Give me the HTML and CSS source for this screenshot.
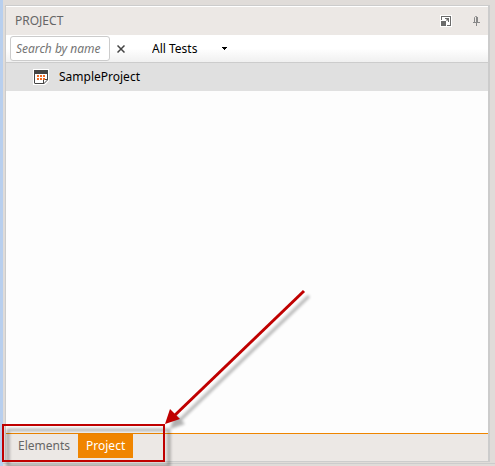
FILE: index.html
```html
<!DOCTYPE html>
<html lang="en">
<head>
<meta charset="utf-8">
<title>Project</title>
<link rel="stylesheet" href="styles.css">
</head>
<body>
<div class="window">
  <main class="panel">
    <header class="panel-header">
      <h1 class="panel-title">PROJECT</h1>
      <button class="icon-button" type="button" aria-label="Float panel">
        <svg width="12" height="12" viewBox="0 0 12 12">
          <path fill="#fff" d="M0 0h12v12H0z"/>
          <path fill="#6b6b6b" d="M1 1h10v10H7v-1h3V2H2v3H1zM1 6h5v5H1zM5 3h4v4H8V5L7 6 6 5l1-1H5z"/>
        </svg>
      </button>
      <button class="icon-button" type="button" aria-label="Pin panel">
        <svg width="8" height="12" viewBox="0 0 8 12">
          <path fill="none" stroke="#888" d="M2.500 7V2.500l1-1h1l1 1V7M1 7.500h7M4.500 8v3"/>
          <path fill="#888" d="M4 2h2v5H4z"/>
        </svg>
      </button>
    </header>
    <div class="toolbar">
      <input class="search" type="text" placeholder="Search by name" aria-label="Search by name">
      <button class="clear" type="button" aria-label="Clear search">
        <svg width="8" height="8" viewBox="0 0 8 8"><path fill="none" stroke="#444" stroke-width="1.500" d="M.5.5l7 7M7.500.5l-7 7"/></svg>
      </button>
      <div class="filter">
        <select class="filter-select" aria-label="Test filter"><option>All Tests</option></select>
        <svg class="filter-arrow" width="5" height="3" viewBox="0 0 5 3"><path d="M0 0h5v1H4v1H3v1H2V2H1V1H0z"/></svg>
      </div>
    </div>
    <ul class="tree">
      <li class="tree-item">
        <svg width="16" height="16" viewBox="0 0 16 16">
          <path fill="#fff" d="M0 0h16v12l-4 4H0z"/>
          <path fill="#444" fill-rule="evenodd" d="M1 1h14v10l-4 4H2l-1-1zM2 5v9h8v-4h4V5z"/>
          <path fill="#fff" d="M11 11h3l-3 3z"/>
          <path fill="#f26a21" d="M4 6h2v2H4zM7 6h2v2H7zM10 6h2v2h-2zM4 9h2v2H4zM7 9h2v2H7zM10 9h2v2h-2z"/>
        </svg>
        <span>SampleProject</span>
      </li>
    </ul>
    <nav class="tabs">
      <button class="tab" type="button">Elements</button>
      <button class="tab tab-active" type="button">Project</button>
    </nav>
  </main>
  <svg class="callout" width="320" height="186" viewBox="0 0 320 186" aria-hidden="true">
    <defs>
      <filter id="soft" x="-10%" y="-20%" width="120%" height="150%"><feGaussianBlur stdDeviation="1.500"/></filter>
    </defs>
    <g filter="url(#soft)" opacity=".3" transform="translate(5 5)">
      <path fill="none" stroke="#000" stroke-width="3" d="M3 145h161v36H3zM304 11L174 136"/>
      <path d="M165 144l5-15 10 10z"/>
    </g>
    <path fill="none" stroke="#c00000" stroke-width="2" d="M3 145h161v36H3z"/>
    <path fill="none" stroke="#c00000" stroke-width="3" d="M304 11L174 136"/>
    <path fill="#c00000" d="M165 144l5-15 10 10z"/>
  </svg>
</div>
</body>
</html>
```
FILE: styles.css
```css
* {
  box-sizing: border-box;
}

body {
  margin: 0;
  font-family: "Noto Sans", "Open Sans", sans-serif;
  font-size: 12px;
  line-height: 16px;
  color: #000;
}

button,
input,
select {
  margin: 0;
  padding: 0;
  border: 0;
  background: none;
  font: inherit;
  color: inherit;
}

svg {
  display: block;
}

.window {
  position: relative;
  display: flex;
  min-height: 100vh;
  padding: 5px 5px 4px 2px;
  border-left: 3px solid #b8cfee;
  background: linear-gradient(#ccc, #ccc) left bottom 2px / 100% 1px no-repeat #e0dcd9;
}

.panel {
  flex: 1;
  display: flex;
  flex-direction: column;
  border: 1px solid #ccc;
  border-right-width: 2px;
  background: #fdfdfd;
}

.panel-header {
  display: flex;
  align-items: center;
  gap: 20px;
  height: 29px;
  padding: 0 8px 0 9px;
  border-top: 1px solid #fff;
  background: #ece8e5;
}

.panel-title {
  flex: 1;
  margin: 0;
  font-size: 12px;
  font-weight: 400;
  color: #666;
}

.toolbar {
  display: flex;
  align-items: center;
  height: 28px;
  padding-left: 4px;
  border-bottom: 1px solid #ccc;
  background: linear-gradient(#fff 50%, #f0f0f0);
}

.search {
  width: 100px;
  height: 25px;
  padding: 0 5px;
  border: 1px solid #ccc;
  border-radius: 3px;
  background: #fff;
}

.search::placeholder {
  font-style: italic;
  color: #757575;
  opacity: 1;
}

.clear {
  padding: 0 7px;
}

.filter {
  display: flex;
  align-items: center;
  margin-left: 20px;
}

.filter-select {
  width: 76px;
  appearance: none;
}

.filter-arrow {
  margin-left: -6px;
  pointer-events: none;
}

.tree {
  flex: 1;
  margin: 0;
  padding: 0;
  list-style: none;
}

.tree-item {
  display: flex;
  align-items: center;
  gap: 10px;
  height: 28px;
  padding-left: 27px;
  background: #e0e0e0;
}

.tabs {
  display: flex;
  align-items: flex-start;
  height: 28px;
  padding-left: 4px;
  border-top: 1px solid #ee8500;
  background: #ece8e5;
}

.tab {
  height: 24px;
  padding: 0 8px;
  color: #666;
}

.tab-active {
  background: #f08500;
  color: #fff;
}

.callout {
  position: absolute;
  left: -3px;
  bottom: 0;
}
```
